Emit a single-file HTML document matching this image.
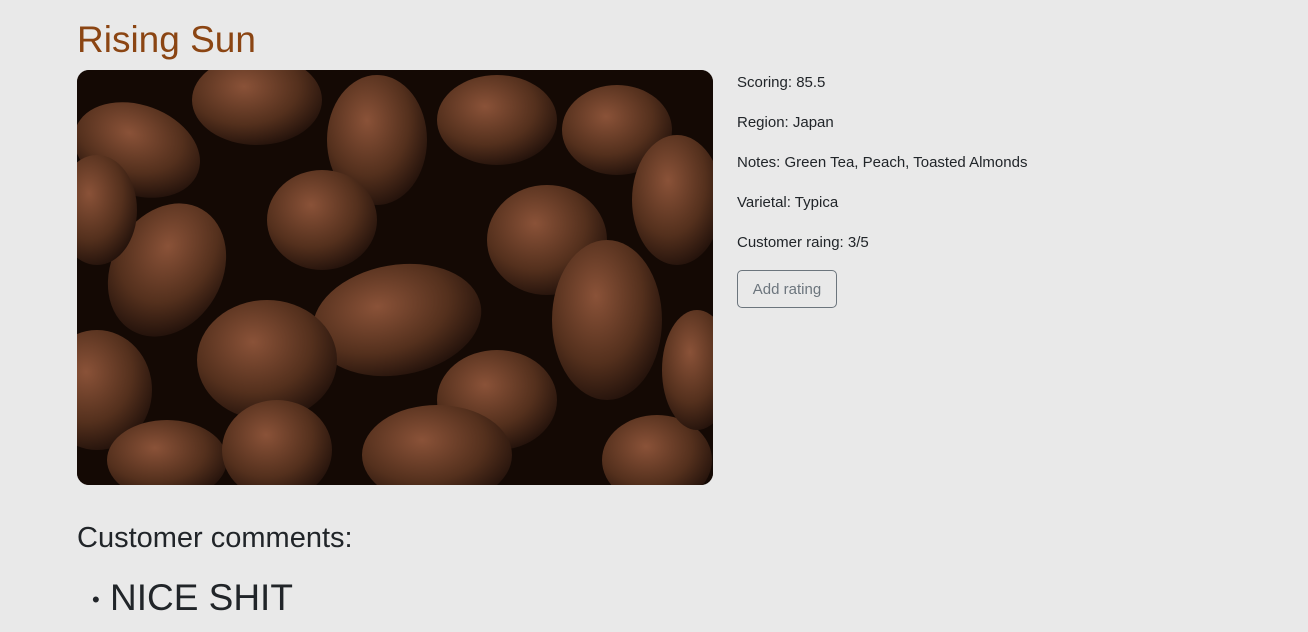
<!DOCTYPE html>
<html><head><meta charset="utf-8"><style>
body{margin:0;background:#e9e9e9;font-family:"Liberation Sans",sans-serif;color:#212529;width:1308px;height:632px;overflow:hidden;position:relative}
h1{position:absolute;left:77px;top:15px;margin:0;font-weight:400;font-size:37px;color:#8b4513;line-height:50px}
.img{position:absolute;left:77px;top:70px;width:636px;height:415px;border-radius:12px;overflow:hidden;background:#1a0c06}
.info{position:absolute;left:737px;top:73px;font-size:15px}
.info div{height:40px;line-height:20px}
.btn{position:absolute;left:737px;top:270px;width:98px;height:36px;border:1px solid #6c757d;border-radius:5px;color:#6c757d;font-size:15px;line-height:38px;text-align:center}
h2{position:absolute;left:77px;top:519px;margin:0;font-weight:400;font-size:29px;line-height:38px}
.li{position:absolute;left:92px;top:575px;font-size:37px;line-height:46px}
</style></head><body>
<h1>Rising Sun</h1>
<div class="img"><svg width="636" height="415" viewBox="0 0 636 415">
<defs><radialGradient id="b" cx="40%" cy="35%" r="70%"><stop offset="0" stop-color="#8a5238"/><stop offset=".6" stop-color="#54301d"/><stop offset="1" stop-color="#20100a"/></radialGradient></defs>
<rect width="636" height="415" fill="#140904"/>
<g fill="url(#b)">
<ellipse cx="60" cy="80" rx="65" ry="45" transform="rotate(20 60 80)"/>
<ellipse cx="180" cy="30" rx="65" ry="45"/>
<ellipse cx="300" cy="70" rx="50" ry="65"/>
<ellipse cx="420" cy="50" rx="60" ry="45"/>
<ellipse cx="540" cy="60" rx="55" ry="45"/>
<ellipse cx="600" cy="130" rx="45" ry="65"/>
<ellipse cx="90" cy="200" rx="55" ry="70" transform="rotate(30 90 200)"/>
<ellipse cx="245" cy="150" rx="55" ry="50"/>
<ellipse cx="470" cy="170" rx="60" ry="55"/>
<ellipse cx="320" cy="250" rx="85" ry="55" transform="rotate(-10 320 250)"/>
<ellipse cx="530" cy="250" rx="55" ry="80"/>
<ellipse cx="190" cy="290" rx="70" ry="60"/>
<ellipse cx="20" cy="320" rx="55" ry="60"/>
<ellipse cx="420" cy="330" rx="60" ry="50"/>
<ellipse cx="360" cy="385" rx="75" ry="50"/>
<ellipse cx="90" cy="390" rx="60" ry="40"/>
<ellipse cx="200" cy="380" rx="55" ry="50"/>
<ellipse cx="580" cy="390" rx="55" ry="45"/>
<ellipse cx="620" cy="300" rx="35" ry="60"/>
<ellipse cx="20" cy="140" rx="40" ry="55"/>
</g></svg></div>
<div class="info"><div>Scoring: 85.5</div><div>Region: Japan</div><div>Notes: Green Tea, Peach, Toasted Almonds</div><div>Varietal: Typica</div><div>Customer raing: 3/5</div></div>
<div class="btn">Add rating</div>
<h2>Customer comments:</h2>
<div class="li"><span style="font-size:22px;vertical-align:middle">•</span> NICE SHIT</div>
</body></html>
